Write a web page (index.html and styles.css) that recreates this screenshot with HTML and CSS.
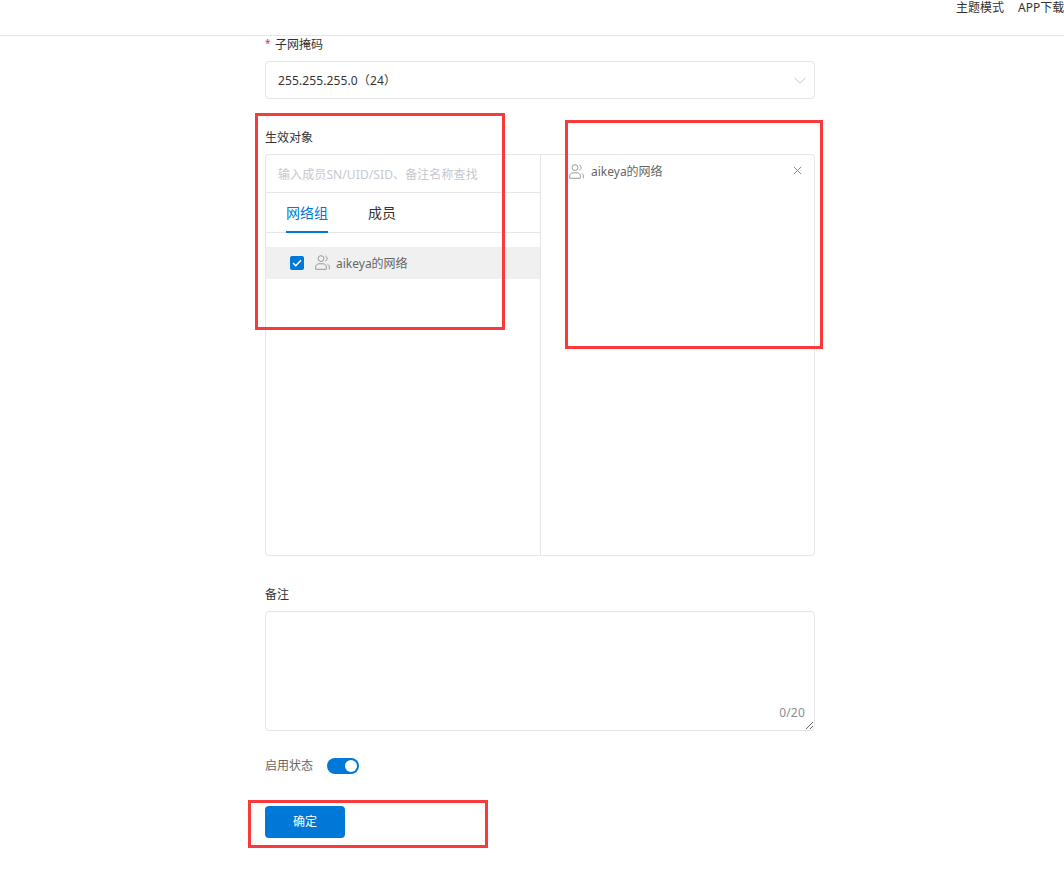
FILE: index.html
```html
<!DOCTYPE html>
<html lang="zh-CN">
<head>
<meta charset="utf-8">
<title>子网掩码</title>
<link rel="stylesheet" href="styles.css">
</head>
<body>
<header class="topbar">
  <span class="topbar-link">主题模式</span>
  <span class="topbar-link topbar-clip">APP下载</span>
</header>
<main class="form">
  <div class="label label-mask"><span class="req">*</span>子网掩码</div>
  <div class="select">
    <span class="value">255.255.255.0（24）</span>
    <svg class="chev" width="12" height="7" viewBox="0 0 12 7"><path d="M.5.8 6 6.200 11.500.8" fill="none" stroke="#c5c8ce" stroke-width="1"/></svg>
  </div>
  <div class="label label-target">生效对象</div>
  <div class="transfer">
    <div class="pane pane-left">
      <div class="search">输入成员SN/UID/SID、备注名称查找</div>
      <div class="tabs">
        <span class="tab tab-active">网络组</span>
        <span class="tab">成员</span>
      </div>
      <div class="row">
        <span class="check"><svg width="10" height="8" viewBox="0 0 10 8"><path d="M1 4l2.800 2.700L9 1.200" fill="none" stroke="#fff" stroke-width="1.500"/></svg></span>
        <svg class="group" width="15" height="15" viewBox="0 0 15 15"><g fill="none" stroke="#999" stroke-width="1"><circle cx="6" cy="3.600" r="2.900"/><path d="M.7 14.300v-2.200c0-2 1.400-3.300 3.300-3.300h4c1.900 0 3.300 1.300 3.300 3.300v2.200z"/><path d="M10.300 1c1.200.5 1.800 1.500 1.800 2.600s-.6 2.100-1.800 2.600M12.500 9.200c1.100.5 1.800 1.500 1.800 2.800v2.300"/></g></svg>
        <span class="name">aikeya的网络</span>
      </div>
    </div>
    <div class="pane pane-right">
      <div class="picked">
        <svg class="group" width="15" height="15" viewBox="0 0 15 15"><g fill="none" stroke="#999" stroke-width="1"><circle cx="6" cy="3.600" r="2.900"/><path d="M.7 14.300v-2.200c0-2 1.400-3.300 3.300-3.300h4c1.900 0 3.300 1.300 3.300 3.300v2.200z"/><path d="M10.300 1c1.200.5 1.800 1.500 1.800 2.600s-.6 2.100-1.800 2.600M12.500 9.200c1.100.5 1.800 1.500 1.800 2.800v2.300"/></g></svg>
        <span class="name">aikeya的网络</span>
        <svg class="close" width="9" height="9" viewBox="0 0 9 9"><path d="M.8.8l7.400 7.400M8.200.8.800 8.200" stroke="#8c8c96" stroke-width="1" fill="none"/></svg>
      </div>
    </div>
  </div>
  <div class="label label-note">备注</div>
  <div class="note-wrap">
    <textarea class="note"></textarea>
    <span class="count">0/20</span>
  </div>
  <div class="status">
    <span class="status-label">启用状态</span>
    <span class="switch"><span class="knob"></span></span>
  </div>
  <button class="submit" type="button">确定</button>
</main>
<div class="mark mark-a"></div>
<div class="mark mark-b"></div>
<div class="mark mark-c"></div>
</body>
</html>
```
FILE: styles.css
```css
* { box-sizing: border-box; }
html, body { height: 100%; }
body {
  margin: 0;
  position: relative;
  overflow: hidden;
  background: #fff;
  color: #333;
  font: 12px/18px "Noto Sans", "Noto Sans CJK SC", sans-serif;
}
.topbar {
  height: 36px;
  border-bottom: 1px solid #e6e6e6;
  display: flex;
  justify-content: flex-end;
  gap: 14px;
  overflow: hidden;
  white-space: nowrap;
}
.topbar-link { line-height: 16px; }
.topbar-clip { width: 46px; overflow: hidden; flex: none; }
.form { width: 550px; margin-left: 265px; }
.label { line-height: 18px; }
.label-mask { margin-top: 0; }
.req { display: inline-block; width: 10px; color: #d9304f; font-size: 10px; line-height: 10px; vertical-align: 2px; }
.select {
  margin-top: 7px;
  height: 38px;
  border: 1px solid #e6e6e6;
  border-radius: 4px;
  display: flex;
  align-items: center;
  justify-content: space-between;
  padding: 0 8px 0 12px;
}
.value { padding-top: 2px; letter-spacing: .12px; }
.label-target { margin-top: 30px; }
.transfer {
  margin-top: 7px;
  height: 402px;
  border: 1px solid #e6e6e6;
  border-radius: 4px;
  display: flex;
}
.pane-left { width: 275px; border-right: 1px solid #e6e6e6; }
.pane-right { flex: 1; }
.search {
  height: 38px;
  border-bottom: 1px solid #e6e6e6;
  padding: 11px 12px 0;
  color: #c5c8ce;
  letter-spacing: .1px;
}
.tabs {
  height: 40px;
  border-bottom: 1px solid #e6e6e6;
  display: flex;
  gap: 40px;
  padding-left: 20px;
}
.tab { font-size: 14px; line-height: 40px; height: 40px; }
.tab-active { color: #0078d7; border-bottom: 2px solid #0078d7; }
.row {
  margin-top: 14px;
  height: 32px;
  background: #f0f0f0;
  display: flex;
  align-items: center;
  padding-left: 24px;
}
.check {
  width: 14px;
  height: 14px;
  border-radius: 2px;
  background: #0078d7;
  display: flex;
  align-items: center;
  justify-content: center;
  margin-right: 11px;
}
.group { flex: none; margin-right: 7px; }
.row .group { margin-right: 6px; margin-top: -1px; }
.name { color: #666; padding-top: 2px; }
.picked {
  display: flex;
  align-items: center;
  height: 18px;
  margin-top: 7px;
  padding: 0 12px 0 28px;
}
.close { margin-left: auto; margin-top: -2px; }
.label-note { margin-top: 30px; }
.note-wrap { margin-top: 7px; height: 120px; position: relative; }
.note {
  display: block;
  width: 100%;
  height: 100%;
  border: 1px solid #e6e6e6;
  border-radius: 4px;
  outline: none;
  margin: 0;
}
.count {
  position: absolute;
  right: 10px;
  bottom: 9px;
  color: #8c8c96;
  letter-spacing: .2px;
}
.status { margin-top: 26px; height: 18px; display: flex; align-items: center; gap: 14px; }
.status-label { color: #666; }
.switch {
  width: 32px;
  height: 16px;
  border-radius: 8px;
  background: #0078d7;
  display: block;
  position: relative;
}
.knob {
  position: absolute;
  right: 2px;
  top: 2px;
  width: 12px;
  height: 12px;
  border-radius: 50%;
  background: #fff;
}
.submit {
  display: block;
  margin-top: 31px;
  width: 80px;
  height: 32px;
  border: 0;
  border-radius: 4px;
  background: #0078d7;
  color: #fff;
  font: inherit;
}
.mark { position: absolute; border: 3px solid #f93a3a; }
.mark-a { left: 255px; top: 113px; width: 250px; height: 217px; }
.mark-b { left: 565px; top: 120px; width: 258px; height: 229px; }
.mark-c { left: 248px; top: 800px; width: 240px; height: 48px; }
```
